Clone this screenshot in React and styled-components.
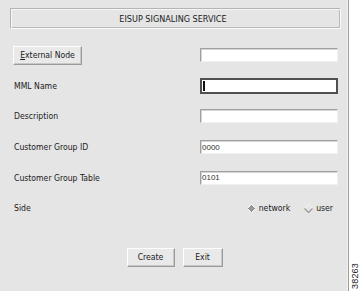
import React from "react";
import styled, { createGlobalStyle } from "styled-components";

const Global = createGlobalStyle`
  html, body { margin: 0; padding: 0; background: #ffffff; }
  body { width: 360px; height: 291px; overflow: hidden; }
`;

const FONT = `"DejaVu Sans Condensed", "Liberation Sans Narrow", "DejaVu Sans", sans-serif`;

const Page = styled.div`
  display: flex;
  width: 360px;
  height: 291px;
  font-family: ${FONT};
  font-stretch: condensed;
  color: #1a1a1a;
`;

const Panel = styled.div`
  width: 349px;
  height: 291px;
  background: #e5e5e5;
  border-right: 1px solid #9c9c9c;
  box-shadow: inset -1px 0 0 #f2f2f2;
  display: flex;
  flex-direction: column;
  padding: 8px 7px 0 10px;
  box-sizing: border-box;
`;

const Side = styled.div`
  flex: 1;
  background: #ffffff;
  display: flex;
  align-items: flex-end;
  justify-content: center;
  padding-bottom: 2px;
`;

const Figure = styled.span`
  writing-mode: vertical-rl;
  transform: rotate(180deg);
  font-family: "Liberation Sans", Arial, sans-serif;
  font-size: 9px;
  color: #222;
  letter-spacing: 0.2px;
`;

const Title = styled.div`
  height: 21px;
  box-sizing: border-box;
  border: 1px solid #b4b4b4;
  border-right-color: #fafafa;
  border-bottom-color: #fafafa;
  box-shadow: inset 1px 1px 0 #f6f6f6, inset -1px -1px 0 #b8b8b8;
  display: flex;
  align-items: center;
  justify-content: center;
  font-size: 9px;
  padding-right: 5px;
`;

const Form = styled.div`
  display: grid;
  grid-template-columns: 187px 138px;
  grid-auto-rows: 30.6px;
  margin-top: 11px;
  padding-left: 3px;
`;

const Label = styled.div`
  display: flex;
  align-items: center;
  font-size: 8.6px;
  padding-left: 1px;
`;

const Cell = styled.div`
  display: flex;
  align-items: center;
`;

const Button = styled.button`
  font-family: ${FONT};
  font-stretch: condensed;
  font-size: 8.6px;
  color: #1a1a1a;
  height: 19px;
  width: ${(p) => p.$w}px;
  padding: 0;
  background: #e9e9e9;
  border: 1px solid #fdfdfd;
  border-right-color: #9a9a9a;
  border-bottom-color: #9a9a9a;
  box-shadow: inset -1px -1px 0 #c8c8c8;
  display: flex;
  align-items: center;
  justify-content: center;
  u { text-decoration: underline; text-underline-offset: 1px; }
`;

const Field = styled.div`
  width: 138px;
  height: 14px;
  box-sizing: border-box;
  background: #ffffff;
  border: 1px solid #a0a0a0;
  border-right-color: #f0f0f0;
  border-bottom-color: #f0f0f0;
  box-shadow: inset 1px 1px 0 #d4d4d4;
  font-family: "Liberation Sans", Arial, sans-serif;
  font-size: 8px;
  display: flex;
  align-items: center;
  padding-left: 1px;
  color: #333;
`;

const FocusField = styled(Field)`
  height: 16px;
  border: 2px solid #505050;
  box-shadow: none;
  padding-left: 1px;
`;

const Caret = styled.span`
  width: 1px;
  height: 10px;
  background: #111;
  border-left: 1px solid #111;
`;

const Radios = styled.div`
  display: flex;
  align-items: center;
  justify-content: flex-end;
  width: 138px;
  padding-right: 5px;
  box-sizing: border-box;
  font-size: 8.6px;
`;

const Radio = styled.label`
  display: flex;
  align-items: center;
  gap: 3px;
  margin-left: ${(p) => p.$ml}px;
`;

const Actions = styled.div`
  display: flex;
  justify-content: center;
  gap: 8px;
  margin-top: 24px;
  padding-right: 2px;
`;

function Diamond({ on }) {
  return (
    <svg width="9" height="9" viewBox="0 0 9 9">
      {on ? (
        <>
          <path d="M4.5 0.5 L8.5 4.5 L4.5 8.5 L0.5 4.5 Z" fill="#8a8a8a" />
          <path d="M4.5 0.5 L8.5 4.5 L4.5 8.5 L0.5 4.5 Z" fill="none" stroke="#fafafa" strokeWidth="1" />
          <path d="M2 4.5 L4.5 2 L7 4.5 L4.5 7 Z" fill="#9a9a9a" />
        </>
      ) : (
        <>
          <path d="M0.5 4.5 L4.5 0.5 L8.5 4.5" fill="none" stroke="#f4f4f4" strokeWidth="1" />
          <path d="M0.5 4.5 L4.5 8.5 L8.5 4.5" fill="none" stroke="#9a9a9a" strokeWidth="1.2" />
        </>
      )}
    </svg>
  );
}

export default function App() {
  return (
    <>
      <Global />
      <Page>
        <Panel>
          <Title>EISUP SIGNALING SERVICE</Title>
          <Form>
            <Cell>
              <Button $w={69}>
                <span><u>E</u>xternal Node</span>
              </Button>
            </Cell>
            <Cell><Field /></Cell>

            <Label>MML Name</Label>
            <Cell><FocusField><Caret /></FocusField></Cell>

            <Label>Description</Label>
            <Cell><Field /></Cell>

            <Label>Customer Group ID</Label>
            <Cell><Field>0000</Field></Cell>

            <Label>Customer Group Table</Label>
            <Cell><Field>0101</Field></Cell>

            <Label>Side</Label>
            <Cell>
              <Radios>
                <Radio $ml={0}><Diamond on />network</Radio>
                <Radio $ml={14}><Diamond />user</Radio>
              </Radios>
            </Cell>
          </Form>
          <Actions>
            <Button $w={48}>Create</Button>
            <Button $w={40}>Exit</Button>
          </Actions>
        </Panel>
        <Side><Figure>38263</Figure></Side>
      </Page>
    </>
  );
}
